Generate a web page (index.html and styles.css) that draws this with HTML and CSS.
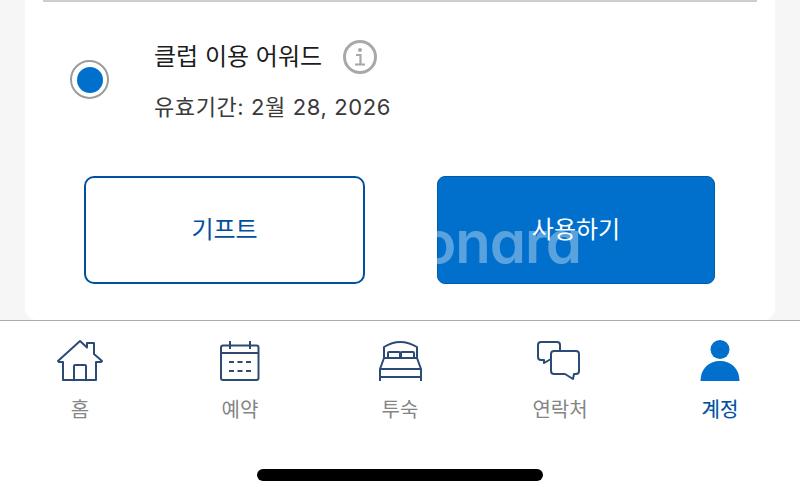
FILE: index.html
```html
<!DOCTYPE html>
<html lang="ko">
<head>
    <title>계정</title>
    <link rel="stylesheet" href="styles.css">
</head>
<body>
    <div class="content">
        <div class="card">
            <div class="divider"></div>
            <div class="reward">
                <div class="radio"><div class="radio-dot"></div></div>
                <div class="reward-info">
                    <div class="reward-title">
                        <span>클럽 이용 어워드</span>
                        <svg class="info-icon" width="34" height="34" viewBox="0 0 34 34">
                            <circle cx="17" cy="17" r="15.500" fill="none" stroke="#a8a8a8" stroke-width="3"/>
                            <circle cx="17" cy="10" r="2" fill="#a8a8a8"/>
                            <path d="M13 15h4.500v9M12 24.500h10" fill="none" stroke="#a8a8a8" stroke-width="2.200"/>
                        </svg>
                    </div>
                    <div class="reward-date">유효기간: 2월 28, 2026</div>
                </div>
            </div>
            <div class="actions">
                <button class="btn btn-outline">기프트</button>
                <button class="btn btn-solid">사용하기</button>
            </div>
        </div>
    </div>

    <nav class="tabbar">
        <div class="tab">
            <svg width="48" height="44" viewBox="0 0 48 44" fill="none" stroke="#2b4a75" stroke-width="2" stroke-linejoin="round">
                <path d="M2 22 24 2l7 6.500V4h7v11l8 7-1 1h-5v18H7V23H3z"/>
                <path d="M18 41V27q0-1 1-1h10q1 0 1 1v14"/>
            </svg>
            <span>홈</span>
        </div>
        <div class="tab">
            <svg width="48" height="44" viewBox="0 0 48 44" fill="none" stroke="#2b4a75" stroke-width="2">
                <rect x="5" y="6.500" width="37.500" height="34.500" rx="2"/>
                <path d="M5 14h37.500"/>
                <path d="M14 2v8M34 2v8"/>
                <path d="M13 23h22M13 32h22" stroke-dasharray="5 3.500"/>
            </svg>
            <span>예약</span>
        </div>
        <div class="tab">
            <svg width="48" height="44" viewBox="0 0 48 44" fill="none" stroke="#2b4a75" stroke-width="2" stroke-linejoin="round">
                <path d="M8 19V8q16-10 33 0v11"/>
                <path d="M12 19v-5q0-1 1-1h10q1 0 1 1v5M25 19v-5q0-1 1-1h11q1 0 1 1v5"/>
                <path d="M8 19h33l4 11v12M4 42V30l4-11M4 30h41M4 38h41"/>
            </svg>
            <span>투숙</span>
        </div>
        <div class="tab">
            <svg width="48" height="44" viewBox="0 0 48 44" fill="none" stroke="#2b4a75" stroke-width="2" stroke-linejoin="round">
                <path d="M15 20 8 24v-3H5q-3 0-3-3V6q0-3 3-3h16q3 0 3 3v6"/>
                <path d="M18 12h22q3 0 3 3v17q0 3-3 3h-2l-1 5-8-5H18q-3 0-3-3V15q0-3 3-3z"/>
            </svg>
            <span>연락처</span>
        </div>
        <div class="tab tab-active">
            <svg width="48" height="44" viewBox="0 0 48 44" fill="#0070cc">
                <circle cx="24" cy="10.500" r="9.500"/>
                <path d="M4.500 42c0-12 8-20 19.500-20s19.500 8 19.500 20z"/>
            </svg>
            <span>계정</span>
        </div>
    </nav>

    <div class="home-bar"><div class="home-indicator"></div></div>

    <div class="watermark">onara</div>
</body>
</html>
```

FILE: styles.css
```css
* {
    box-sizing: border-box;
}
body {
    position: relative;
    margin: 0;
    width: 800px;
    height: 498px;
    overflow: hidden;
    background: #fff;
    font-family: "Inter", "Noto Sans CJK KR", sans-serif;
}
.content {
    height: 320px;
    background: #f6f6f6;
    padding: 0 25px;
}
.card {
    height: 320px;
    background: #fff;
    border-radius: 0 0 12px 12px;
    padding: 0 18px;
}
.divider {
    height: 2px;
    background: #cdcdcd;
}
.reward {
    display: flex;
    align-items: center;
    height: 149px;
    padding: 4px 0 0 27px;
    margin-bottom: 25px;
}
.radio {
    width: 39px;
    height: 39px;
    margin-top: 2px;
    border: 2px solid #9c9c9c;
    border-radius: 50%;
    display: flex;
    align-items: center;
    justify-content: center;
    margin-right: 45px;
}
.radio-dot {
    width: 26px;
    height: 26px;
    border-radius: 50%;
    background: #0070cc;
}
.reward-title {
    display: flex;
    align-items: center;
    gap: 21px;
    font-size: 24px;
    color: #1c1c1c;
    height: 36px;
    margin-bottom: 17px;
}
.info-icon {
    margin-top: 5px;
}
.reward-date {
    font-size: 22px;
    color: #3a3a3a;
    letter-spacing: 0.6px;
}
.actions {
    display: flex;
    justify-content: space-between;
    padding: 0 42px 0 41px;
}
.btn {
    height: 108px;
    font-family: inherit;
    font-size: 24px;
    padding: 0 0 6px;
}
.btn-outline {
    width: 281px;
    background: #fff;
    border: 2px solid #00509d;
    border-radius: 10px;
    color: #00509d;
}
.btn-solid {
    width: 278px;
    background: #0070cc;
    border: 1px solid #005ba8;
    border-radius: 8px;
    color: #fff;
}
.watermark {
    position: absolute;
    left: 421px;
    top: 207px;
    font-size: 58px;
    font-weight: 600;
    font-feature-settings: "cv11";
    letter-spacing: -1px;
    line-height: 70px;
    color: rgba(255, 255, 255, 0.35);
    pointer-events: none;
}
.tabbar {
    display: flex;
    height: 125px;
    border-top: 1px solid #ababab;
    background: #fff;
    padding-top: 18px;
}
.tab {
    flex: 1;
    display: flex;
    flex-direction: column;
    align-items: center;
    gap: 11px;
    font-size: 20px;
    color: #858585;
}
.tab-active {
    color: #00509d;
    -webkit-text-stroke: 0.15px #00509d;
}
.home-bar {
    height: 53px;
    display: flex;
    justify-content: center;
    padding-top: 24px;
}
.home-indicator {
    width: 286px;
    height: 12px;
    border-radius: 6px;
    background: #000;
}
```
